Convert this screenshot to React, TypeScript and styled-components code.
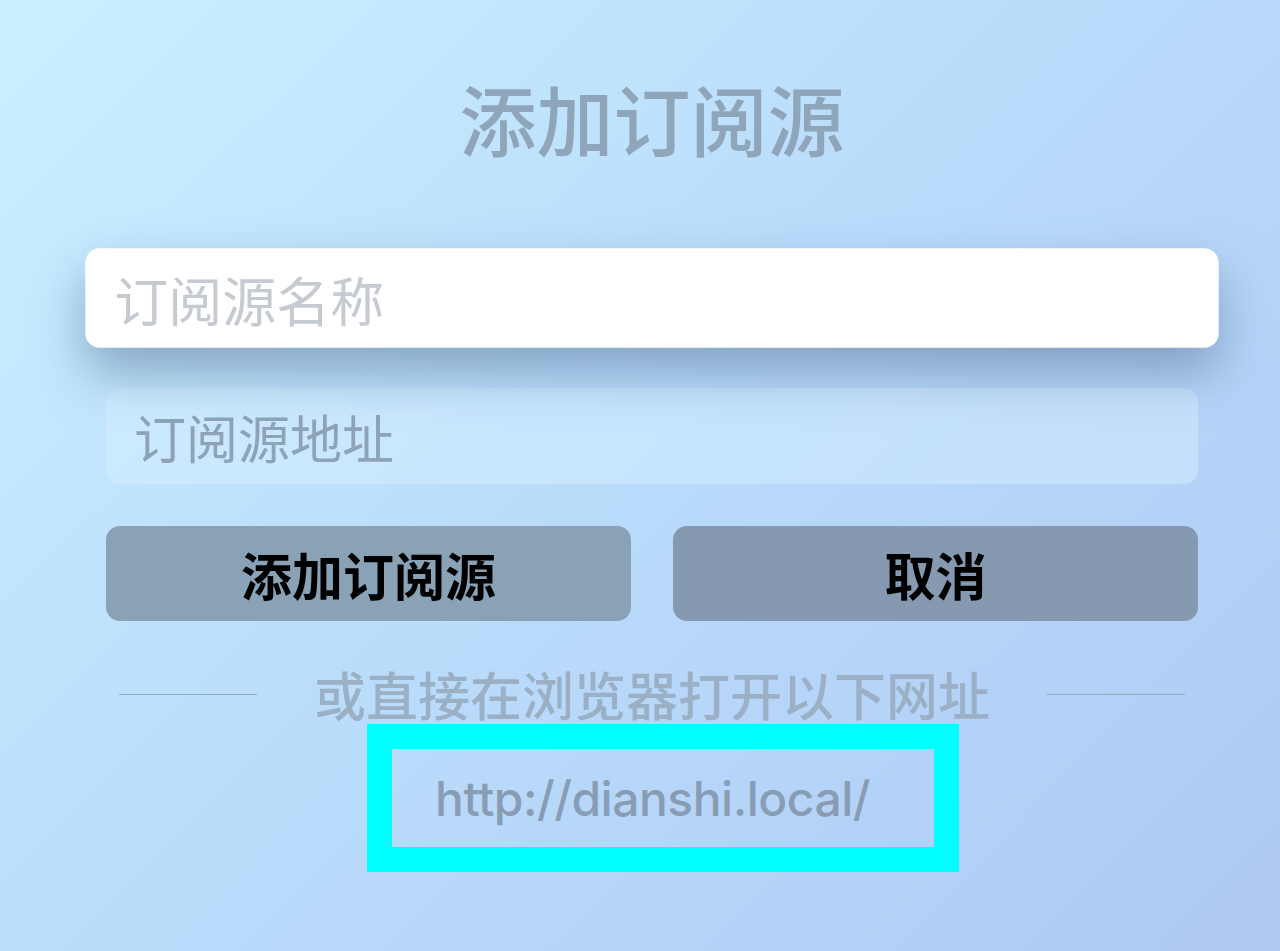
import React from "react";
import styled, { createGlobalStyle } from "styled-components";

const Global = createGlobalStyle`
  html, body { margin: 0; padding: 0; }
  body {
    width: 1280px;
    height: 951px;
    overflow: hidden;
    font-family: "Noto Sans CJK SC", "Noto Sans", sans-serif;
    background: linear-gradient(135deg, #cbf0ff 0%, #bcdffc 40%, #b5d4f8 70%, #afc9f1 100%);
  }
`;

const Page = styled.div`
  width: 1280px;
  height: 951px;
  box-sizing: border-box;
  padding: 0 82px 0 106px;
  display: flex;
  flex-direction: column;
`;

const Title = styled.h1`
  margin: 70px 0 0;
  text-align: center;
  font-size: 77px;
  line-height: 96px;
  font-weight: 500;
  color: #8fa5b9;
`;

const Field = styled.div<{ $focused?: boolean }>`
  height: 96px;
  border-radius: 14px;
  display: flex;
  align-items: center;
  padding: 0 28px;
  box-sizing: border-box;
  font-size: 52px;
  font-weight: 400;
  background: ${(p) => (p.$focused ? "#ffffff" : "rgba(214, 240, 255, 0.45)")};
  color: ${(p) => (p.$focused ? "#c6cad1" : "#8ea3b6")};
  transform: ${(p) => (p.$focused ? "scale(1.038)" : "none")};
  box-shadow: ${(p) =>
    p.$focused ? "0 24px 48px rgba(95, 125, 160, 0.6)" : "none"};
  position: relative;
  z-index: ${(p) => (p.$focused ? 2 : 1)};
`;

const FirstField = styled(Field)`
  margin-top: 84px;
`;

const SecondField = styled(Field)`
  margin-top: 42px;
`;

const ButtonRow = styled.div`
  margin-top: 42px;
  display: grid;
  grid-template-columns: 1fr 1fr;
  gap: 42px;
`;

const Button = styled.div<{ $tone: string }>`
  height: 95px;
  border-radius: 14px;
  background: ${(p) => p.$tone};
  display: flex;
  align-items: center;
  justify-content: center;
  font-size: 51px;
  font-weight: 600;
  color: #000;
`;

const Divider = styled.div`
  margin-top: 44px;
  padding: 0 13px;
  display: flex;
  align-items: center;
  gap: 57px;
`;

const Line = styled.div`
  width: 138px;
  height: 1px;
  background: #94a9c2;
`;

const DividerText = styled.div`
  flex: 1;
  text-align: center;
  font-size: 52px;
  line-height: 58px;
  font-weight: 500;
  color: #9bb0c5;
  white-space: nowrap;
`;

const UrlBox = styled.div`
  margin: 1px 0 0 261px;
  width: 592px;
  height: 148px;
  box-sizing: border-box;
  border: 25px solid #00ffff;
  display: flex;
  align-items: center;
  padding-left: 43px;
`;

const Url = styled.span`
  font-family: Inter, "Liberation Sans", sans-serif;
  font-size: 48px;
  font-weight: 500;
  letter-spacing: -0.5px;
  color: #889db3;
`;

export default function App() {
  return (
    <>
      <Global />
      <Page>
        <Title>添加订阅源</Title>
        <FirstField $focused>订阅源名称</FirstField>
        <SecondField>订阅源地址</SecondField>
        <ButtonRow>
          <Button $tone="#8aa2b6">添加订阅源</Button>
          <Button $tone="#8599b1">取消</Button>
        </ButtonRow>
        <Divider>
          <Line />
          <DividerText>或直接在浏览器打开以下网址</DividerText>
          <Line />
        </Divider>
        <UrlBox>
          <Url>http://dianshi.local/</Url>
        </UrlBox>
      </Page>
    </>
  );
}
